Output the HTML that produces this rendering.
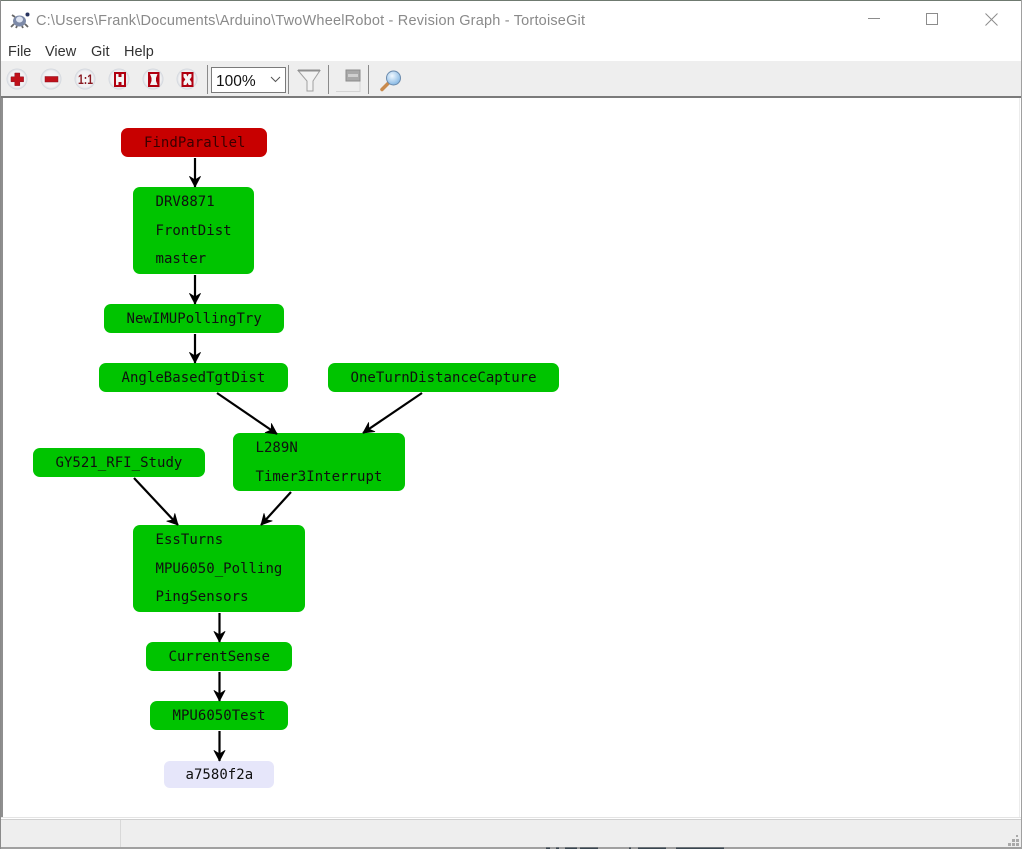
<!DOCTYPE html>
<html>
<head>
<meta charset="utf-8">
<title>Revision Graph</title>
<style>
html,body{margin:0;padding:0;background:#fff;width:1022px;height:849px;overflow:hidden}
svg{display:block}
.n{font-family:"DejaVu Sans Mono",monospace;font-size:14px;letter-spacing:.03px;fill:#101010}
.u{font-family:"Liberation Sans",sans-serif;font-size:14.5px;fill:#333}
</style>
</head>
<body>
<svg width="1022" height="849" viewBox="0 0 1022 849" xmlns="http://www.w3.org/2000/svg">
<defs>
<radialGradient id="c" cx=".5" cy=".5" r=".5"><stop offset="0" stop-color="#f8f8f8"/><stop offset=".78" stop-color="#f0f0f2"/><stop offset="1" stop-color="#cfd4db"/></radialGradient>
<radialGradient id="g" cx=".4" cy=".35" r=".7"><stop offset="0" stop-color="#f0f8ff"/><stop offset="1" stop-color="#7fb4e2"/></radialGradient>
<marker id="a" markerUnits="userSpaceOnUse" markerWidth="16" markerHeight="16" refX="12" refY="7" orient="auto"><path d="M1.500 1.500 L12 7 L1.500 12.500 L5 7 Z" fill="#000" stroke="#000" stroke-width=".8" stroke-linejoin="round"/></marker>
</defs>

<rect width="1022" height="849" fill="#fff"/>
<rect x="0" y="0" width="1022" height="1" fill="#6f7a70"/>
<rect x="0" y="0" width="1" height="849" fill="#8a8a8a"/>
<rect x="1021" y="0" width="1" height="849" fill="#a0a0a0"/>

<!-- Title bar -->
<g transform="translate(11,12)">
<ellipse cx="8.500" cy="9" rx="6.500" ry="5.500" fill="#7d8aa8"/>
<ellipse cx="8.500" cy="7.500" rx="3.500" ry="3" fill="#dfe5f2"/>
<path d="M3 12 L0 15 M14 12 L17 15 M4 5 L1 3 M6 14 L5 16 M11 14 L12 16" stroke="#666" stroke-width="1.800" fill="none"/>
<circle cx="16.500" cy="2.500" r="2" fill="#27345f"/>
</g>
<text x="36" y="25" font-family="Liberation Sans,sans-serif" font-size="14.5" fill="#8a8a8a" textLength="549" lengthAdjust="spacing">C:\Users\Frank\Documents\Arduino\TwoWheelRobot - Revision Graph - TortoiseGit</text>
<rect x="868" y="18" width="12" height="1" fill="#8c8c8c"/>
<rect x="926.500" y="13.500" width="11" height="11" fill="none" stroke="#8c8c8c"/>
<path d="M985.500 13.500 L997.500 25.500 M997.500 13.500 L985.500 25.500" stroke="#8c8c8c" stroke-width="1" fill="none"/>

<!-- Menu -->
<text class="u" x="8" y="56">File</text>
<text class="u" x="45" y="56">View</text>
<text class="u" x="91" y="56">Git</text>
<text class="u" x="124" y="56">Help</text>

<!-- Toolbar -->
<rect x="1" y="61" width="1020" height="35" fill="#eeeeee"/>
<rect x="1" y="96" width="1020" height="2" fill="#7a7a7a"/>
<g>
<circle cx="17" cy="79" r="10.500" fill="url(#c)"/>
<circle cx="51" cy="79" r="10.500" fill="url(#c)"/>
<circle cx="85" cy="79" r="10.500" fill="url(#c)"/>
<circle cx="119" cy="79" r="10.500" fill="url(#c)"/>
<circle cx="153" cy="79" r="10.500" fill="url(#c)"/>
<circle cx="187" cy="79" r="10.500" fill="url(#c)"/>
<path d="M14.800 73h5v3.800h3.800v5h-3.800v3.800h-5v-3.800h-3.800v-5h3.800z" fill="#c0101a" stroke="#8a1020" stroke-width=".5"/>
<rect x="45" y="76.500" width="13" height="5.500" fill="#c0101a" stroke="#8a1020" stroke-width=".5"/>
<text x="78" y="84" font-family="Liberation Sans,sans-serif" font-size="14" font-weight="bold" fill="#8a1a22" textLength="15" lengthAdjust="spacingAndGlyphs">1:1</text>
<path d="M114 72h12v15h-12z M116 74h2.500v3h3v-3h2.500v11h-2.500v-3h-3v3h-2.500z" fill="#b00010" fill-rule="evenodd"/>
<path d="M148 72h11.500v15h-11.500z M150 74h7.500l-1.500 4v3l1.500 4h-7.500l1.500-4v-3z" fill="#b00010" fill-rule="evenodd"/>
<path d="M181.500 72h12v15h-12z M183.500 74h2.800l1.200 2.500l1.200-2.500h2.800v3l-1.800 2.500l1.800 2.500v3h-2.800l-1.200-2.500l-1.200 2.500h-2.800v-3l1.800-2.500l-1.800-2.500z" fill="#b00010" fill-rule="evenodd"/>
</g>

<rect x="207" y="65" width="1" height="29" fill="#8a8a8a"/>
<rect x="211.500" y="67.500" width="74" height="25" fill="#fff" stroke="#7a7a7a"/>
<text x="216" y="86" font-family="Liberation Sans,sans-serif" font-size="15.500" fill="#111">100%</text>
<path d="M271 77 L275.500 81.500 L280 77" fill="none" stroke="#555" stroke-width="1"/>
<rect x="288" y="65" width="1" height="29" fill="#8a8a8a"/>
<path d="M298 70.500 H320 L313 81 V91 H307 V81 Z" fill="#f2f2f2" stroke="#a0a0a0" stroke-width="1"/>
<path d="M298 70.500 H320" stroke="#8f8f8f" stroke-width="2"/>
<rect x="328" y="65" width="1" height="29" fill="#8a8a8a"/>
<path d="M336 91.500 H360 V70" fill="none" stroke="#d4d4d4"/>
<rect x="346" y="70" width="14" height="11" fill="#a8a8a8" stroke="#8c8c8c"/>
<rect x="348" y="74" width="10" height="3" fill="#cfcfcf"/>
<rect x="368" y="65" width="1" height="29" fill="#8a8a8a"/>
<path d="M382 89.500 L388.500 83" stroke="#c98a4c" stroke-width="3.500" stroke-linecap="round"/>
<circle cx="393.500" cy="78" r="7" fill="url(#g)" stroke="#6a8aac" stroke-width="1"/>

<!-- Canvas edges -->
<rect x="1" y="98" width="2" height="720" fill="#8f8f8f"/>
<rect x="1019" y="98" width="1" height="720" fill="#ececec"/>

<!-- Nodes -->
<g fill="#00c400">
<rect x="121" y="128" width="146" height="29" rx="7" fill="#c80000"/>
<rect x="133" y="187" width="121" height="87" rx="7"/>
<rect x="104" y="304" width="180" height="29" rx="7"/>
<rect x="99" y="363" width="189" height="29" rx="7"/>
<rect x="328" y="363" width="231" height="29" rx="7"/>
<rect x="233" y="433" width="172" height="58" rx="7"/>
<rect x="33" y="448" width="172" height="29" rx="7"/>
<rect x="133" y="525" width="172" height="87" rx="7"/>
<rect x="146" y="642" width="146" height="29" rx="7"/>
<rect x="150" y="701" width="138" height="29" rx="7"/>
<rect x="164" y="761" width="110" height="27" rx="6" fill="#e6e6fa"/>
</g>

<!-- Edges -->
<g stroke="#000" stroke-width="2.200" fill="none">
<path d="M195 158 V187" marker-end="url(#a)"/>
<path d="M195 275 V304" marker-end="url(#a)"/>
<path d="M195 334 V363" marker-end="url(#a)"/>
<path d="M217 393 L277 434" marker-end="url(#a)"/>
<path d="M422 393 L363 433" marker-end="url(#a)"/>
<path d="M134 478 L178 525" marker-end="url(#a)"/>
<path d="M291 492 L261 525" marker-end="url(#a)"/>
<path d="M219.500 613 V642" marker-end="url(#a)"/>
<path d="M219.500 672 V701" marker-end="url(#a)"/>
<path d="M219.500 731 V761" marker-end="url(#a)"/>
</g>

<!-- Labels -->
<g>
<text class="n" x="144" y="147" style="fill:#3a0000">FindParallel</text>
<text class="n" x="155.500" y="206">DRV8871</text>
<text class="n" x="155.500" y="235">FrontDist</text>
<text class="n" x="155.500" y="263">master</text>
<text class="n" x="126.500" y="323">NewIMUPollingTry</text>
<text class="n" x="121.500" y="382">AngleBasedTgtDist</text>
<text class="n" x="350.500" y="382">OneTurnDistanceCapture</text>
<text class="n" x="255.500" y="452">L289N</text>
<text class="n" x="255.500" y="481">Timer3Interrupt</text>
<text class="n" x="55.500" y="467">GY521_RFI_Study</text>
<text class="n" x="155.500" y="544">EssTurns</text>
<text class="n" x="155.500" y="573">MPU6050_Polling</text>
<text class="n" x="155.500" y="601">PingSensors</text>
<text class="n" x="168.500" y="661">CurrentSense</text>
<text class="n" x="172.500" y="720">MPU6050Test</text>
<text class="n" x="185.500" y="779">a7580f2a</text>
</g>

<!-- Status bar -->
<rect x="1" y="817" width="1020" height="1" fill="#e4e4e4"/>
<rect x="1" y="818" width="1020" height="1" fill="#ffffff"/>
<rect x="1" y="819" width="1020" height="1" fill="#cfcfcf"/>
<rect x="1" y="820" width="1020" height="27" fill="#eeeeee"/>
<rect x="120" y="820" width="1" height="27" fill="#d8d8d8"/>
<rect x="1" y="847" width="1020" height="2" fill="#a0a0a0"/>
<g fill="#a9a9a9">
<rect x="1016" y="835" width="2" height="2"/>
<rect x="1012" y="839" width="3" height="3"/><rect x="1016" y="839" width="3" height="3"/>
<rect x="1008" y="843" width="3" height="3"/><rect x="1012" y="843" width="3" height="3"/><rect x="1016" y="843" width="3" height="3"/>
</g>
<g fill="#3a4650">
<rect x="546" y="847.500" width="4" height="1.500"/><rect x="556" y="847.500" width="3" height="1.500"/><rect x="565" y="847.500" width="12" height="1.500"/><rect x="580" y="847.500" width="18" height="1.500"/>
<rect x="629" y="847.500" width="2" height="1.500"/><rect x="638" y="847.500" width="28" height="1.500"/><rect x="676" y="847.500" width="48" height="1.500"/>
</g>
</svg>
</body>
</html>
